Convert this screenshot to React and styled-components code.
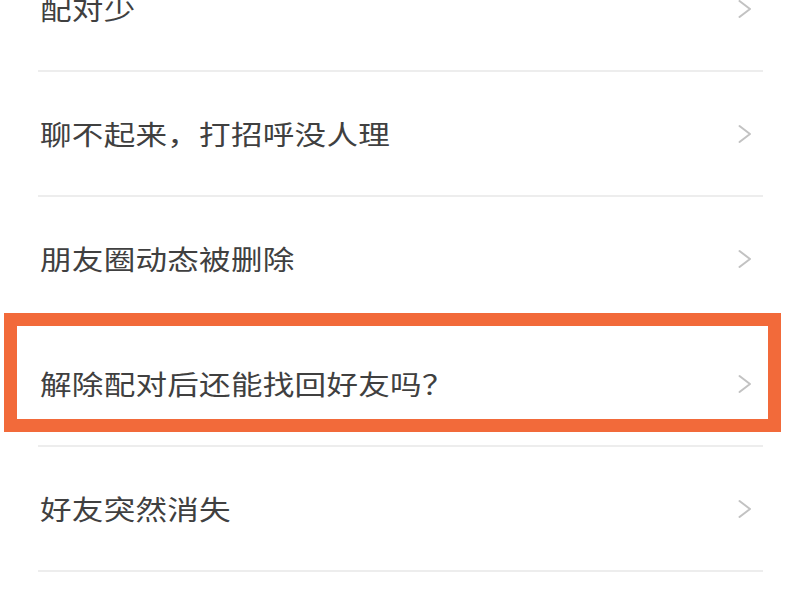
import React from "react";
import styled, { createGlobalStyle } from "styled-components";

const Global = createGlobalStyle`
  html, body { margin: 0; padding: 0; background: #ffffff; overflow: hidden; }
  body { font-family: "Noto Sans CJK SC", "Noto Sans", sans-serif; }
`;

const Page = styled.div`
  width: 800px;
  height: 600px;
  overflow: hidden;
  background: #ffffff;
`;

const List = styled.ul`
  list-style: none;
  margin: -53px 0 0 0;
  padding: 0 37px 0 38px;
`;

const Row = styled.li`
  position: relative;
  height: 123px;
  border-bottom: 2px solid #ededed;
  display: flex;
  align-items: center;
  justify-content: space-between;
  padding: 0 10px 0 2px;
`;

const Label = styled.span`
  display: inline-block;
  font-family: "Noto Sans CJK SC", sans-serif;
  font-size: 27px;
  letter-spacing: 0.2px;
  color: #404040;
  white-space: nowrap;
  transform: scaleX(1.17);
  transform-origin: left center;
`;

const Highlight = styled.div`
  position: absolute;
  top: -9px;
  bottom: 13px;
  left: -34px;
  right: -18px;
  border: 13px solid #f26a3a;
  pointer-events: none;
`;

const Chevron = () => (
  <svg width="16" height="20" viewBox="0 0 16 20" fill="none">
    <path d="M2.5 2 L13 10 L2.5 18" stroke="#c2c2c2" strokeWidth="2" strokeLinecap="round" strokeLinejoin="round" />
  </svg>
);

const items = [
  { text: "配对少" },
  { text: "聊不起来，打招呼没人理" },
  { text: "朋友圈动态被删除" },
  { text: "解除配对后还能找回好友吗？", highlighted: true },
  { text: "好友突然消失" },
];

export default function App() {
  return (
    <Page>
      <Global />
      <List>
        {items.map((it) => (
          <Row key={it.text}>
            <Label>{it.text}</Label>
            <Chevron />
            {it.highlighted && <Highlight />}
          </Row>
        ))}
      </List>
    </Page>
  );
}
